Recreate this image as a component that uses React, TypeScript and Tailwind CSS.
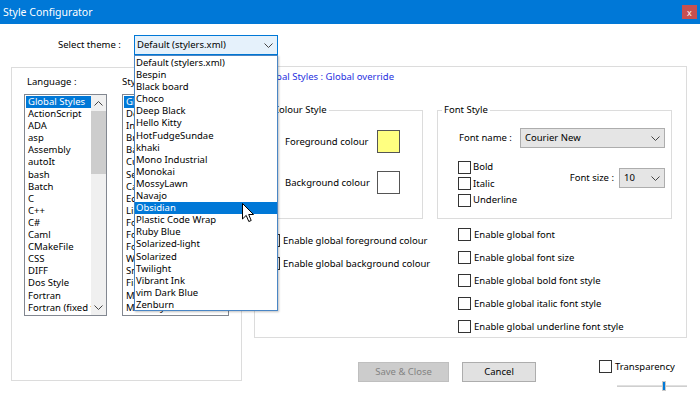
const themes = [
  "Default (stylers.xml)",
  "Bespin",
  "Black board",
  "Choco",
  "Deep Black",
  "Hello Kitty",
  "HotFudgeSundae",
  "khaki",
  "Mono Industrial",
  "Monokai",
  "MossyLawn",
  "Navajo",
  "Obsidian",
  "Plastic Code Wrap",
  "Ruby Blue",
  "Solarized-light",
  "Solarized",
  "Twilight",
  "Vibrant Ink",
  "vim Dark Blue",
  "Zenburn",
];

const languages = [
  "Global Styles",
  "ActionScript",
  "ADA",
  "asp",
  "Assembly",
  "autoIt",
  "bash",
  "Batch",
  "C",
  "C++",
  "C#",
  "Caml",
  "CMakeFile",
  "CSS",
  "DIFF",
  "Dos Style",
  "Fortran",
  "Fortran (fixed form)",
];

const styles = [
  "Global override",
  "Default Style",
  "Indent guideline style",
  "Brace highlight style",
  "Bad brace colour",
  "Current line background colour",
  "Selected text colour",
  "Caret colour",
  "Edge colour",
  "Line number margin",
  "Fold",
  "Fold active",
  "Fold margin",
  "White space symbol",
  "Smart HighLighting",
  "Find Mark Style",
  "Mark Style 1",
  "Mark Style 2",
  "Mark Style 3",
];

const Chevron = ({ up = false }: { up?: boolean }) => (
  <svg width="9" height="5" viewBox="0 0 9 5" className={up ? "rotate-180" : ""}>
    <polyline points="0.5,0.5 4.5,4.5 8.5,0.5" fill="none" stroke="#444" strokeWidth="1" />
  </svg>
);

const Box = () => <span className="block w-[13px] h-[13px] shrink-0 border border-[#333] bg-white" />;

const Check = ({ label }: { label: string }) => (
  <div className="flex items-center h-[23px] gap-[3px]">
    <Box />
    <span className="whitespace-nowrap">{label}</span>
  </div>
);

const App = () => {
  return (
    <div
      className="relative w-[700px] h-[398px] overflow-hidden bg-white text-black text-[9.5px] leading-[12px]"
      style={{ fontFamily: '"Noto Sans", sans-serif' }}
    >
      {/* title bar */}
      <div className="h-[24px] bg-[#0078d7] flex items-center pl-[3px] text-white">
        <span className="text-[10.5px]">Style Configurator</span>
        <div className="ml-auto mr-[3px] w-[15px] h-[14px] bg-[#c75050] flex items-center justify-center text-[9px] leading-none text-white">
          x
        </div>
      </div>

      {/* theme select */}
      <div className="mt-[11px] flex items-center h-[20px]">
        <span className="ml-[58px] w-[76px]">Select theme :</span>
        <div className="w-[144px] h-[20px] border border-[#0078d7] bg-[#e5f1fb] flex items-center pl-[2px] pr-[4px]">
          <span>Default (stylers.xml)</span>
          <span className="ml-auto">
            <Chevron />
          </span>
        </div>
      </div>

      <div className="mt-[11px] flex items-start">
        {/* left panel */}
        <div className="ml-[11px] mt-[1px] w-[231px] h-[314px] border border-[#dcdcdc] flex pt-[8px]">
          <div className="ml-[12px] w-[83px]">
            <div className="pl-[3px]">Language :</div>
            <div className="mt-[6px] h-[222px] border border-[#828790] flex p-[1px] pr-0">
              <div className="flex-1 overflow-hidden">
                {languages.map((l, i) => (
                  <div
                    key={l}
                    className={`h-[12.1px] px-[2px] whitespace-nowrap ${i === 0 ? "bg-[#0078d7] text-white" : ""}`}
                  >
                    {l}
                  </div>
                ))}
              </div>
              <div className="w-[15px] -my-[1px] bg-[#f0f0f0] flex flex-col items-center">
                <div className="h-[16px] flex items-center">
                  <Chevron up />
                </div>
                <div className="w-full h-[63px] bg-[#cdcdcd]" />
                <div className="mt-auto h-[16px] flex items-center">
                  <Chevron />
                </div>
              </div>
            </div>
          </div>
          <div className="ml-[15px] w-[107px]">
            <div>Style :</div>
            <div className="mt-[6px] h-[222px] border border-[#828790] p-[1px] pr-0 overflow-hidden">
              {styles.map((s, i) => (
                <div
                  key={s}
                  className={`h-[12.1px] px-[2px] whitespace-nowrap ${i === 0 ? "bg-[#0078d7] text-white" : ""}`}
                >
                  {s}
                </div>
              ))}
            </div>
          </div>
        </div>

        {/* right column */}
        <div className="ml-[12px] w-[433px]">
          <div className="h-[272px] border border-[#dcdcdc]">
            <div className="ml-[6px] mt-[4px] text-[#1f2fe0]">Global Styles : Global override</div>

            <div className="mt-[21px] flex">
              <fieldset className="ml-[11px] w-[157px] h-[115px] border border-[#dcdcdc]">
                <legend className="ml-[4px] px-[2px]">Colour Style</legend>
                <div className="mt-[14px] flex items-center pl-[18px] pr-[22px]">
                  <span>Foreground colour</span>
                  <span className="ml-auto w-[23px] h-[23px] border border-[#555] bg-[#ffff80]" />
                </div>
                <div className="mt-[18px] flex items-center pl-[18px] pr-[22px]">
                  <span>Background colour</span>
                  <span className="ml-auto w-[23px] h-[23px] border border-[#555] bg-white" />
                </div>
              </fieldset>

              <fieldset className="ml-[14px] w-[235px] h-[115px] border border-[#dcdcdc]">
                <legend className="ml-[4px] px-[2px]">Font Style</legend>
                <div className="mt-[12px] flex items-center pl-[21px] pr-[6px]">
                  <span className="w-[61px]">Font name :</span>
                  <div className="w-[145px] h-[20px] border border-[#adadad] bg-[#e5e5e5] flex items-center pl-[4px] pr-[4px]">
                    <span>Courier New</span>
                    <span className="ml-auto">
                      <Chevron />
                    </span>
                  </div>
                </div>
                <div className="mt-[11px] flex items-start pl-[20px] pr-[6px]">
                  <div>
                    {["Bold", "Italic", "Underline"].map((t) => (
                      <div key={t} className="flex items-center h-[16.5px] gap-[2px]">
                        <Box />
                        <span>{t}</span>
                      </div>
                    ))}
                  </div>
                  <div className="ml-auto mt-[9px] flex items-center">
                    <span className="mr-[5px]">Font size :</span>
                    <div className="w-[46px] h-[20px] border border-[#adadad] bg-[#e5e5e5] flex items-center pl-[4px] pr-[4px]">
                      <span>10</span>
                      <span className="ml-auto">
                        <Chevron />
                      </span>
                    </div>
                  </div>
                </div>
              </fieldset>
            </div>

            <div className="flex">
              <div className="ml-[12px] w-[191px] mt-[10px]">
                <Check label="Enable global foreground colour" />
                <Check label="Enable global background colour" />
              </div>
              <div className="mt-[4px] flex flex-col">
                <Check label="Enable global font" />
                <Check label="Enable global font size" />
                <Check label="Enable global bold font style" />
                <Check label="Enable global italic font style" />
                <Check label="Enable global underline font style" />
              </div>
            </div>
          </div>

          {/* bottom buttons */}
          <div className="mt-[24px] flex items-start">
            <div className="ml-[104px] w-[95px] h-[20px] border border-[#bfbfbf] bg-[#cccccc] text-[#838383] flex items-center justify-center">
              Save &amp; Close
            </div>
            <div className="ml-[13px] w-[77px] h-[20px] border border-[#adadad] bg-[#e1e1e1] flex items-center justify-center">
              Cancel
            </div>
            <div className="ml-[63px] -mt-[2px]">
              <div className="flex items-center gap-[3px]">
                <Box />
                <span>Transparency</span>
              </div>
              <div className="relative ml-[18px] mt-[8px] w-[70px] h-[10px] flex items-center">
                <div className="w-full h-[2px] bg-[#e0e0e0] border-b border-[#cfcfcf]" />
                <div className="absolute left-[45px] top-0 w-[4px] h-[10px] bg-[#007ad9] border border-[#c9c9c9]" />
              </div>
            </div>
          </div>
        </div>
      </div>

      {/* open theme dropdown */}
      <div className="absolute left-[134px] top-[55px] w-[144px] h-[256px] border border-[#4a86c5] bg-white py-px shadow-[1px_1px_2px_rgba(0,0,0,0.25)]">
        {themes.map((t) => (
          <div
            key={t}
            className={`h-[12.1px] px-[1px] whitespace-nowrap ${t === "Obsidian" ? "bg-[#0078d7] text-white" : ""}`}
          >
            {t}
          </div>
        ))}
      </div>

      {/* mouse pointer */}
      <svg className="absolute left-[242px] top-[203px]" width="13" height="20" viewBox="0 0 13 20">
        <path d="M0.5,0.5 L0.5,16 L4.2,12.4 L6.8,18.5 L9.2,17.5 L6.7,11.5 L11.5,11.5 Z" fill="white" stroke="black" strokeWidth="1" strokeLinejoin="round" />
      </svg>
    </div>
  );
};

export default App;
